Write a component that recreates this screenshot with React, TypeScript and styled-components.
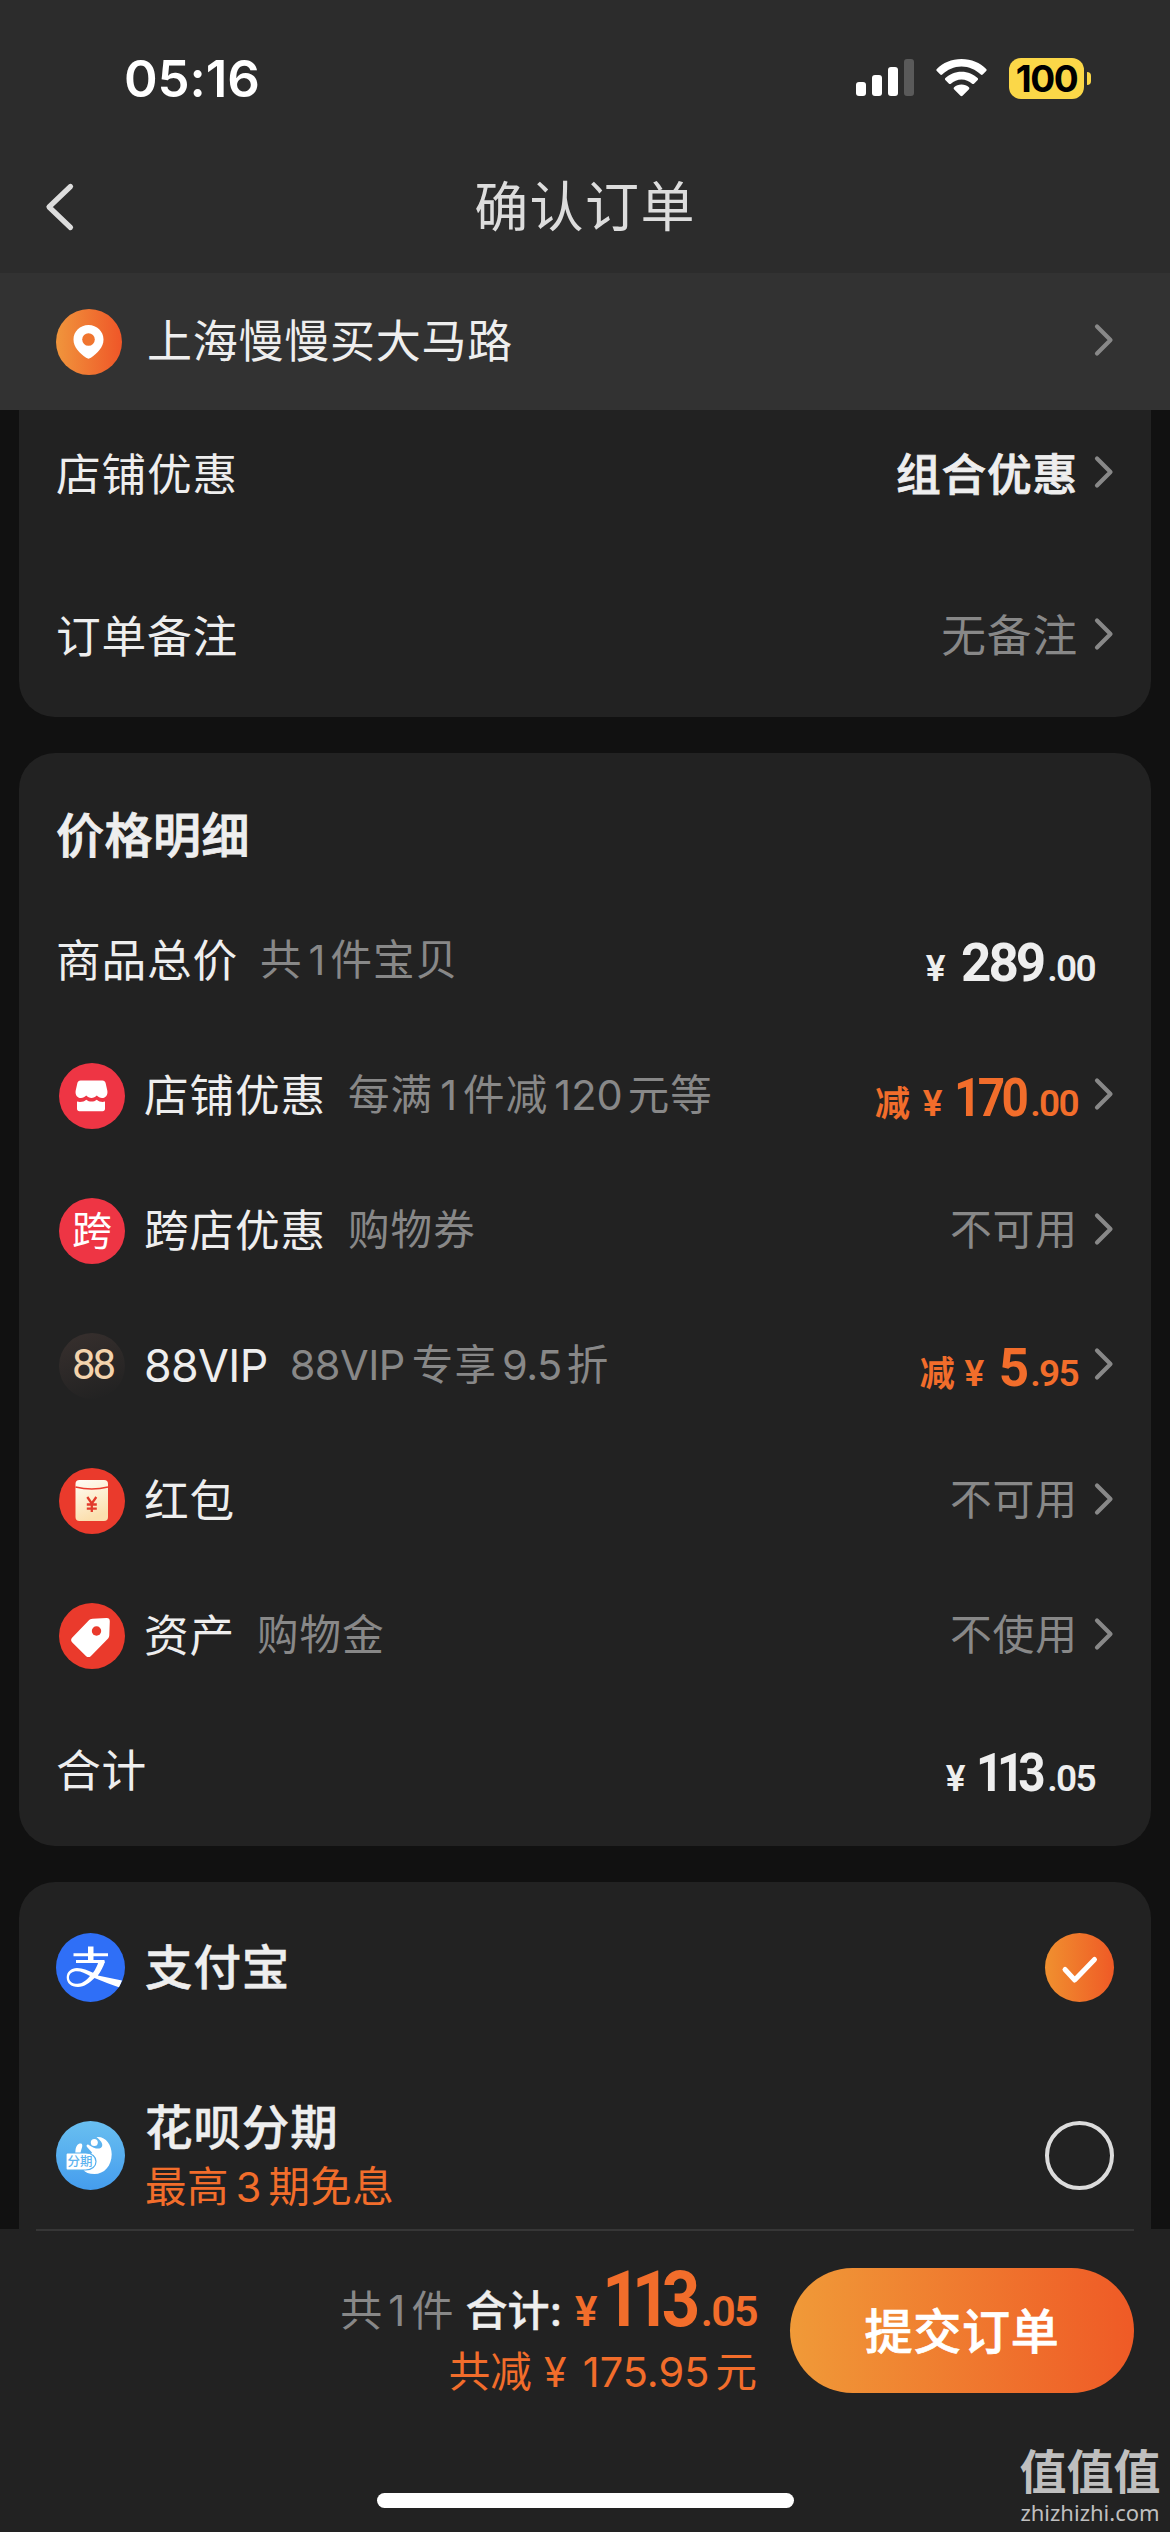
import React from "react";
import styled, { createGlobalStyle } from "styled-components";

const GlobalStyle = createGlobalStyle`
  * { box-sizing: border-box; }
  html, body { margin: 0; padding: 0; background: #111111; }
  body {
    font-family: Inter, "Noto Sans CJK SC", sans-serif;
    text-autospace: no-autospace;
    -webkit-font-smoothing: antialiased;
  }
`;

const ORANGE = "#f26d2b";

const Screen = styled.div`
  width: 1170px;
  height: 2532px;
  display: flex;
  flex-direction: column;
  overflow: hidden;
  background: #111111;
  color: #eeeeee;
  line-height: 1;
  white-space: nowrap;
`;

/* ---------- top area ---------- */

const TopArea = styled.header`
  height: 273px;
  flex: none;
  background: #2c2c2c;
`;

const StatusBar = styled.div`
  height: 141px;
  padding: 15px 79px 0 124px;
  display: flex;
  align-items: center;
  justify-content: space-between;
`;

const Clock = styled.span`
  font-size: 51px;
  font-weight: 600;
  color: #ffffff;
  letter-spacing: -0.1px;
`;

const StatusIcons = styled.div`
  display: flex;
  align-items: center;
  gap: 22px;
`;

const Battery = styled.div`
  display: flex;
  align-items: center;
  gap: 3px;
`;

const BatteryBody = styled.div`
  width: 75px;
  height: 41px;
  border-radius: 12px;
  background: #fbd748;
  color: #000000;
  font-size: 37px;
  font-weight: 700;
  letter-spacing: -1.4px;
  display: flex;
  align-items: center;
  justify-content: center;
`;

const BatteryNub = styled.div`
  width: 4px;
  height: 13px;
  border-radius: 0 5px 5px 0;
  background: #fbd748;
`;

const NavBar = styled.div`
  height: 132px;
  padding: 0 44px;
  display: grid;
  grid-template-columns: 60px 1fr 60px;
  align-items: center;
`;

const NavTitle = styled.h1`
  margin: 2px 0 0;
  text-align: center;
  font-size: 54px;
  font-weight: 400;
  letter-spacing: 1.4px;
  color: #dddddd;
`;

const AddressBar = styled.div`
  height: 137px;
  flex: none;
  padding: 0 56px 0 56px;
  display: flex;
  align-items: center;
  background: #323232;
`;

const AddressText = styled.span`
  flex: 1;
  margin-left: 25px;
  font-size: 45px;
  letter-spacing: 0.75px;
`;

/* ---------- cards ---------- */

const Scroller = styled.main`
  height: 1819px;
  flex: none;
  overflow: hidden;
  padding: 0 19px;
  display: flex;
  flex-direction: column;
  gap: 36px;
`;

const Card = styled.section<{ $height: number; $pad: string; $gap?: number; $open?: boolean }>`
  height: ${(p) => p.$height}px;
  flex: none;
  padding: ${(p) => p.$pad};
  display: flex;
  flex-direction: column;
  gap: ${(p) => p.$gap ?? 0}px;
  background: #222222;
  border-radius: ${(p) => (p.$open ? "0 0 36px 36px" : "36px")};
`;

const CardTitle = styled.h2`
  margin: 0;
  height: 113px;
  padding-bottom: 2px;
  display: flex;
  align-items: center;
  font-size: 48px;
  font-weight: 500;
  -webkit-text-stroke: 0.9px currentColor;
  letter-spacing: 0.5px;
`;

const Row = styled.div<{ $height: number }>`
  height: ${(p) => p.$height}px;
  flex: none;
  display: flex;
  align-items: center;
  justify-content: space-between;
`;

const Side = styled.div`
  display: flex;
  align-items: center;
`;

const Label = styled.span<{ $latin?: boolean }>`
  padding-top: 2px;
  font-size: 44.7px;
  letter-spacing: ${(p) => (p.$latin ? -0.6 : 0.8)}px;
`;

const Hint = styled.span`
  margin-left: 22px;
  font-size: 41.5px;
  letter-spacing: 1.1px;
  color: #888888;
`;

const Digits = styled.span<{ $l?: number; $r?: number; $ls?: number }>`
  margin: 0 ${(p) => p.$r ?? 0}px 0 ${(p) => p.$l ?? 0}px;
  letter-spacing: ${(p) => p.$ls ?? 0}px;
`;

const Value = styled.span<{ $size: number }>`
  font-size: ${(p) => p.$size}px;
  letter-spacing: 0.9px;
  color: #888888;
`;

const StrongValue = styled(Label)`
  font-weight: 500;
  -webkit-text-stroke: 0.8px currentColor;
`;

const IconSlot = styled.div`
  width: 66px;
  height: 66px;
  margin: 0 19px 0 3px;
  flex: none;
  display: flex;
`;

const RoundBadge = styled.div`
  width: 66px;
  height: 66px;
  border-radius: 50%;
  display: flex;
  align-items: center;
  justify-content: center;
`;

const CrossBadge = styled(RoundBadge)`
  background: #ee3544;
  color: #ffffff;
  font-size: 40px;
`;

const VipBadge = styled(RoundBadge)`
  padding: 0 0 1px 1px;
  background: linear-gradient(160deg, #38302e, #222222 90%);
  color: #f3d3ac;
  font-family: Roboto, sans-serif;
  font-size: 42px;
  letter-spacing: -3px;
`;

/* ---------- money ---------- */

const Money = styled.span<{ $color: string; $drop?: number; $end?: number }>`
  display: flex;
  align-items: baseline;
  margin-top: ${(p) => p.$drop ?? 0}px;
  margin-right: ${(p) => p.$end ?? 0}px;
  font-family: Roboto, "Noto Sans CJK SC", sans-serif;
  font-weight: 700;
  color: ${(p) => p.$color};
`;

const MoneyTag = styled.span<{ $r: number }>`
  font-size: 35px;
  font-weight: 600;
  margin-right: ${(p) => p.$r}px;
`;

const Yen = styled.span<{ $r: number; $size?: number }>`
  font-size: ${(p) => p.$size ?? 37}px;
  font-weight: 600;
  width: ${(p) => (p.$size ? 24 : 21)}px;
  display: flex;
  justify-content: center;
  margin-right: ${(p) => p.$r}px;
`;

type Fit = { size?: number; ls?: number; scale?: number; pull?: number; push?: number };

const Whole = styled.span<{ $fit: Fit }>`
  display: block;
  font-size: ${(p) => p.$fit.size ?? 53}px;
  letter-spacing: ${(p) => p.$fit.ls ?? -3}px;
  transform: scaleX(${(p) => p.$fit.scale ?? 1});
  transform-origin: right;
  margin: 0 ${(p) => p.$fit.push ?? 0}px 0 ${(p) => -(p.$fit.pull ?? 0)}px;
`;

const Cents = styled.span<{ $size?: number }>`
  font-size: ${(p) => p.$size ?? 37}px;
  font-weight: 600;
  letter-spacing: -1.7px;
  margin-left: 4px;
`;

/* ---------- payment ---------- */

const PayText = styled.div`
  margin-left: 20px;
  display: flex;
  flex-direction: column;
  gap: 15px;
`;

const PayName = styled.span`
  padding-top: 2px;
  font-size: 47.5px;
  font-weight: 500;
  -webkit-text-stroke: 0.5px currentColor;
  letter-spacing: 0.9px;
`;

const PayNote = styled.span`
  font-size: 41.5px;
  letter-spacing: 0.4px;
  color: ${ORANGE};
`;

const Radio = styled.div<{ $on?: boolean }>`
  width: 69px;
  height: 69px;
  border-radius: 50%;
  border: ${(p) => (p.$on ? "none" : "4px solid #dcdcdc")};
  background: ${(p) => (p.$on ? "linear-gradient(90deg, #f0902f, #ef5a26)" : "transparent")};
`;

/* ---------- footer ---------- */

const Footer = styled.footer`
  flex: 1;
  padding: 0 36px;
  background: #222222;
  display: grid;
  grid-template-rows: 2px 1fr;
  position: relative;
`;

const Divider = styled.div`
  background: #363636;
`;

const Checkout = styled.div`
  height: 162px;
  padding-top: 37px;
  display: flex;
  justify-content: flex-end;
  gap: 33px;
`;

const Totals = styled.div`
  margin-top: -6px;
  display: flex;
  flex-direction: column;
  align-items: flex-end;
`;

const TotalLine = styled.div`
  height: 77px;
  display: flex;
  align-items: baseline;
  font-size: 42px;
`;

const Count = styled.span`
  color: #888888;
  margin-right: 12px;
`;

const SumLabel = styled.span`
  font-weight: 500;
  -webkit-text-stroke: 0.4px currentColor;
  margin-right: 12px;
`;

const SavedLine = styled.div`
  margin-top: 13px;
  display: flex;
  align-items: baseline;
  font-size: 41.5px;
  color: ${ORANGE};
`;

const SavedYen = styled.span`
  width: 21px;
  margin: 0 17px 0 13px;
  display: flex;
  justify-content: center;
  font-size: 41px;
`;

const SubmitButton = styled.button`
  width: 344px;
  height: 125px;
  padding: 0 0 5px;
  border: none;
  border-radius: 63px;
  background: linear-gradient(90deg, #f09a38, #ef5a26);
  color: #ffffff;
  font-family: inherit;
  font-size: 48px;
  font-weight: 500;
  -webkit-text-stroke: 0.7px currentColor;
  letter-spacing: 0.8px;
`;

const HomeIndicator = styled.div`
  position: absolute;
  left: 377px;
  bottom: 24px;
  width: 417px;
  height: 15px;
  border-radius: 8px;
  background: #ffffff;
`;

const Watermark = styled.div`
  position: absolute;
  right: 9px;
  bottom: 8px;
  width: 142px;
  display: flex;
  flex-direction: column;
  align-items: center;
  gap: 4px;
  color: #bfbfbf;
`;

const WatermarkName = styled.span`
  font-size: 47px;
  font-weight: 700;
  line-height: 48px;
`;

const WatermarkUrl = styled.span`
  font-family: "Noto Sans", sans-serif;
  font-size: 22px;
  line-height: 24px;
`;

/* ---------- drawings ---------- */

const ChevronSvg = styled.svg`
  display: block;
  flex: none;
  margin: -3px 0 0 16px;
`;

const Chevron = () => (
  <ChevronSvg width="20" height="34" viewBox="0 0 20 34" fill="none">
    <path d="M3 3.5 16.5 17 3 30.5" stroke="#888888" strokeWidth="4.2" strokeLinecap="round" strokeLinejoin="round" />
  </ChevronSvg>
);

const BackIcon = () => (
  <svg width="32" height="50" viewBox="0 0 32 50" fill="none">
    <path d="M26.5 4.5 5 25l21.5 20.5" stroke="#dddddd" strokeWidth="5.2" strokeLinecap="round" strokeLinejoin="round" />
  </svg>
);

const SignalIcon = () => (
  <svg width="58" height="38" viewBox="0 0 58 38">
    <rect x="0" y="23" width="10" height="14" rx="3" fill="#fff" />
    <rect x="16" y="16" width="10" height="21" rx="3" fill="#fff" />
    <rect x="32" y="8" width="10" height="29" rx="3" fill="#fff" />
    <rect x="48" y="0" width="10" height="37" rx="3" fill="#5a5a5a" />
  </svg>
);

const WifiIcon = () => (
  <svg width="51" height="38" viewBox="0 0 51 38" fill="#fff">
    <path d="M25.5 0C35.6 0 44 3.800 50.200 9.900c.6.6.6 1.400 0 2l-3.500 3.700c-.5.5-1.300.5-1.900 0C39.500 10.700 33 7.600 25.500 7.600S11.500 10.700 6.200 15.600c-.6.5-1.400.5-1.900 0L.8 11.900c-.6-.6-.6-1.400 0-2C7 3.800 15.400 0 25.500 0Z" />
    <path d="M25.500 12.700c6.500 0 12 2.500 16.100 6.300.6.600.6 1.400.1 2l-3.700 3.700c-.5.5-1.300.5-1.900 0-2.900-2.600-6.500-4.300-10.600-4.300s-7.700 1.700-10.600 4.300c-.6.5-1.400.5-1.900 0L9.300 21c-.5-.6-.5-1.400.1-2 4.100-3.800 9.600-6.300 16.100-6.300Z" />
    <path d="M25.500 25.600c2.900 0 5.400 1 7.400 2.700.6.500.6 1.400.1 1.900l-6.500 6.600c-.6.600-1.400.6-2 0L18 30.200c-.5-.5-.5-1.400.1-1.900 2-1.700 4.500-2.700 7.400-2.700Z" />
  </svg>
);

const PinIcon = () => (
  <svg width="66" height="66" viewBox="0 0 66 66">
    <defs>
      <linearGradient id="pin" x1="0" x2="1" y1="0" y2="0">
        <stop offset="0" stopColor="#f0953c" />
        <stop offset="1" stopColor="#ef5628" />
      </linearGradient>
    </defs>
    <circle cx="33" cy="33" r="33" fill="url(#pin)" />
    <path d="M32.500 16C41 16 47.500 22.500 47.500 30.500c0 8-6 13.500-12.600 18.300-1.500 1.100-3.300 1.100-4.800 0C23.500 44 17.500 38.500 17.500 30.500 17.500 22.500 24 16 32.500 16Z" fill="#fff" />
    <circle cx="32.500" cy="30.500" r="6.300" fill="#f0752f" />
  </svg>
);

const ShopIcon = () => (
  <svg width="66" height="66" viewBox="0 0 66 66">
    <circle cx="33" cy="33" r="33" fill="#ee3544" />
    <path d="M21.500 17.500h22c1.600 0 2.700.9 3.100 2.400l1.700 7.600c.8 4.400-1.500 7.600-5.300 7.600-2 0-3.700-.9-5.200-2.500-1.500 1.600-3.300 2.500-5.300 2.500s-3.800-.9-5.300-2.500c-1.500 1.600-3.200 2.500-5.200 2.500-3.800 0-6.100-3.200-5.300-7.600l1.700-7.600c.4-1.500 1.500-2.400 3.100-2.400Z" fill="#fff" />
    <path d="M18 38.600c4 1 7-.1 9.200-1.900 1.700 1.300 3.300 1.900 5.300 1.900s3.600-.6 5.300-1.900c2.200 1.800 5.200 2.900 8.200 1.900v7.200c0 1.500-.9 2.400-2.400 2.400H20.400c-1.500 0-2.400-.9-2.400-2.400Z" fill="#fff" />
  </svg>
);

const EnvelopeIcon = () => (
  <svg width="66" height="66" viewBox="0 0 66 66">
    <defs>
      <linearGradient id="env" x1="0" x2="0.300" y1="0" y2="1">
        <stop offset="0" stopColor="#fffdf6" />
        <stop offset="1" stopColor="#fbdfae" />
      </linearGradient>
    </defs>
    <circle cx="33" cy="33" r="33" fill="#ea3a2c" />
    <rect x="16.500" y="12" width="32.500" height="41" rx="4" fill="url(#env)" />
    <path d="M16.500 19q16.200 4 32.500 0" stroke="#ea3a2c" strokeWidth="1.700" fill="none" />
    <path d="m28.300 29 4.500 6.500 4.500-6.500M32.800 35.500V44M27.800 36.500h10M27.800 40.700h10" stroke="#e23a2c" strokeWidth="2.300" fill="none" />
  </svg>
);

const TagIcon = () => (
  <svg width="66" height="66" viewBox="0 0 66 66">
    <circle cx="33" cy="33" r="33" fill="#ea3a2c" />
    <path d="M33.500 15.700 47.500 15c2.200-.1 3.300 1 3.300 3.200l-.5 14c-.1 1.600-.6 2.700-1.700 3.800L32 52.900c-1.600 1.600-3.500 1.600-5.100 0L13.300 39.600c-1.600-1.600-1.600-3.500 0-5.100L29.700 17.500c1.100-1.100 2.200-1.700 3.800-1.800Z" fill="#fff" />
    <circle cx="37.500" cy="28" r="4.700" fill="#ea3a2c" />
  </svg>
);

const AlipayIcon = () => (
  <svg width="69" height="69" viewBox="0 0 69 69">
    <defs>
      <clipPath id="alipayClip">
        <circle cx="34.500" cy="34.500" r="34.500" />
      </clipPath>
    </defs>
    <g clipPath="url(#alipayClip)">
      <rect width="69" height="69" fill="#2f6ff7" />
      <path d="M32 13.500h5.500v15H32ZM17.500 20.300h34.500v2.900H17.500ZM20 27h28.500v2.900H20Z" fill="#fff" />
      <path d="M42.500 28.500h6.500c-1.800 5.500-4.200 10-7.200 14L66 47.500 63.500 54.500c-8.500-2.700-16.500-6-25-9.500-5 5-10.200 8.900-16.500 8.900-7 0-11.300-4-11.300-9.500 0-5.500 4.500-9.400 10.300-9.400 6 0 10.500 2.200 16 4.800 2.500-3.500 4.500-7.200 5.500-11.300Z" fill="#fff" />
      <path d="M34 43c-4.500-2.700-8.800-4.800-13.200-4.800-4.500 0-7.800 2.400-7.800 6.200 0 4.100 3.500 6.300 8.500 6.300 4.600 0 8.500-3 12.500-7.700Z" fill="#2f6ff7" />
    </g>
  </svg>
);

const BadgeSvgText = styled.text`
  font-family: "Noto Sans CJK SC", sans-serif;
  font-size: 12.5px;
  font-weight: 500;
`;

const HuabeiIcon = () => (
  <svg width="69" height="69" viewBox="0 0 69 69">
    <defs>
      <linearGradient id="huabei" x1="0" x2="0" y1="0" y2="1">
        <stop offset="0" stopColor="#69bff0" />
        <stop offset="1" stopColor="#459dee" />
      </linearGradient>
    </defs>
    <circle cx="34.500" cy="34.500" r="34.500" fill="url(#huabei)" />
    <path d="M19.500 29c.6-4 2.300-6.500 5-6.500 2.200 0 2.300 2.500.7 6.500l-1 4h-5Z" fill="#fff" />
    <path d="M40.500 16c9-1 15.200 7.400 15.200 17.200C55.700 45 48 53 38.500 53c-5.500 0-9.300-1.500-11.500-4.500l9-17-5.200-5.800c-.8-1.400.4-2.700 2-1.800 6.300 4.500 12 4.600 13.300 1.300 1-2.800-1.600-5.700-5.600-9.200Z" fill="#fff" />
    <circle cx="38.300" cy="21.500" r="3.500" fill="#fff" />
    <path d="M11.500 32h18c6.500 0 10.500 3.700 10.500 8.500S36 49 29.500 49h-18c-1 0-1.500-.5-1.500-1.500v-14c0-1 .5-1.500 1.500-1.500Z" fill="#fff" stroke="#55aeee" strokeWidth="1.200" />
    <BadgeSvgText x="11.500" y="45" fill="#5db3ef">分期</BadgeSvgText>
  </svg>
);

const CheckMark = () => (
  <svg width="69" height="69" viewBox="0 0 69 69" fill="none">
    <path d="M20 36.500 29.700 47 49.500 26.500" stroke="#fff" strokeWidth="5" strokeLinecap="round" strokeLinejoin="round" />
  </svg>
);

/* ---------- composed parts ---------- */

type AmountProps = {
  tag?: boolean;
  tagGap?: number;
  whole: string;
  cents: string;
  color: string;
  yenGap: number;
  end?: number;
  fit?: Fit;
};

const Amount = ({ tag, tagGap = 12, whole, cents, color, yenGap, end, fit = {} }: AmountProps) => (
  <Money $color={color} $drop={6} $end={end}>
    {tag && <MoneyTag $r={tagGap}>减</MoneyTag>}
    <Yen $r={yenGap}>¥</Yen>
    <Whole $fit={fit}>{whole}</Whole>
    <Cents>.{cents}</Cents>
  </Money>
);

type PriceRowProps = {
  icon?: React.ReactNode;
  label: string;
  latin?: boolean;
  hint?: React.ReactNode;
  right: React.ReactNode;
  link?: boolean;
};

const PriceRow = ({ icon, label, latin, hint, right, link }: PriceRowProps) => (
  <Row $height={135}>
    <Side>
      {icon && <IconSlot>{icon}</IconSlot>}
      <Label $latin={latin}>{label}</Label>
      {hint && <Hint>{hint}</Hint>}
    </Side>
    <Side>
      {right}
      {link && <Chevron />}
    </Side>
  </Row>
);

export default function App() {
  return (
    <>
      <GlobalStyle />
      <Screen>
        <TopArea>
          <StatusBar>
            <Clock>05:16</Clock>
            <StatusIcons>
              <SignalIcon />
              <WifiIcon />
              <Battery>
                <BatteryBody>100</BatteryBody>
                <BatteryNub />
              </Battery>
            </StatusIcons>
          </StatusBar>
          <NavBar>
            <BackIcon />
            <NavTitle>确认订单</NavTitle>
          </NavBar>
        </TopArea>

        <AddressBar>
          <PinIcon />
          <AddressText>上海慢慢买大马路</AddressText>
          <Chevron />
        </AddressBar>

        <Scroller>
          <Card $height={307} $pad="14px 37px 0 37px" $gap={62} $open>
            <Row $height={100}>
              <Label>店铺优惠</Label>
              <Side>
                <StrongValue>组合优惠</StrongValue>
                <Chevron />
              </Side>
            </Row>
            <Row $height={100}>
              <Label>订单备注</Label>
              <Side>
                <Value $size={44.7}>无备注</Value>
                <Chevron />
              </Side>
            </Row>
          </Card>

          <Card $height={1093} $pad="27px 37px 0 37px">
            <CardTitle>价格明细</CardTitle>
            <PriceRow
              label="商品总价"
              hint={<>共<Digits $l={6} $r={5}>1</Digits>件宝贝</>}
              right={<Amount whole="289" cents="00" color="#eeeeee" yenGap={15} end={19} />}
            />
            <PriceRow
              icon={<ShopIcon />}
              label="店铺优惠"
              hint={<>每满<Digits $l={7} $r={6}>1</Digits>件减<Digits $l={6} $r={5}>120</Digits>元等</>}
              right={
                <Amount
                  tag
                  whole="170"
                  cents="00"
                  color={ORANGE}
                  yenGap={11}
                  fit={{ ls: -4, scale: 0.9, pull: 8, push: 1 }}
                />
              }
              link
            />
            <PriceRow
              icon={<CrossBadge>跨</CrossBadge>}
              label="跨店优惠"
              hint="购物券"
              right={<Value $size={41.8}>不可用</Value>}
              link
            />
            <PriceRow
              icon={<VipBadge>88</VipBadge>}
              label="88VIP"
              latin
              hint={<><Digits $r={7} $ls={-0.5}>88VIP</Digits>专享<Digits $l={5} $r={5} $ls={-0.5}>9.5</Digits>折</>}
              right={<Amount tag tagGap={9} whole="5" cents="95" color={ORANGE} yenGap={14} />}
              link
            />
            <PriceRow icon={<EnvelopeIcon />} label="红包" right={<Value $size={41.8}>不可用</Value>} link />
            <PriceRow icon={<TagIcon />} label="资产" hint="购物金" right={<Value $size={41.8}>不使用</Value>} link />
            <PriceRow
              label="合计"
              right={
                <Amount
                  whole="113"
                  cents="05"
                  color="#eeeeee"
                  yenGap={10}
                  end={19}
                  fit={{ ls: -7, scale: 0.9, pull: 7, push: 4 }}
                />
              }
            />
          </Card>

          <Card $height={500} $pad="35px 37px 0 37px" $gap={78}>
            <Row $height={100}>
              <Side>
                <AlipayIcon />
                <PayText>
                  <PayName>支付宝</PayName>
                </PayText>
              </Side>
              <Radio $on>
                <CheckMark />
              </Radio>
            </Row>
            <Row $height={120}>
              <Side>
                <HuabeiIcon />
                <PayText>
                  <PayName>花呗分期</PayName>
                  <PayNote>最高<Digits $l={7} $r={7}>3</Digits>期免息</PayNote>
                </PayText>
              </Side>
              <Radio />
            </Row>
          </Card>
        </Scroller>

        <Footer>
          <Divider />
          <Checkout>
            <Totals>
              <TotalLine>
                <Count>共<Digits $l={6} $r={6}>1</Digits>件</Count>
                <SumLabel>合计:</SumLabel>
                <Money $color={ORANGE}>
                  <Yen $r={4} $size={42}>¥</Yen>
                  <Whole $fit={{ size: 77, ls: -10, scale: 0.87, pull: 13, push: 5 }}>113</Whole>
                  <Cents $size={43}>.05</Cents>
                </Money>
              </TotalLine>
              <SavedLine>
                共减<SavedYen>¥</SavedYen>175.95<Digits $l={6}>元</Digits>
              </SavedLine>
            </Totals>
            <SubmitButton>提交订单</SubmitButton>
          </Checkout>
          <HomeIndicator />
          <Watermark>
            <WatermarkName>值值值</WatermarkName>
            <WatermarkUrl>zhizhizhi.com</WatermarkUrl>
          </Watermark>
        </Footer>
      </Screen>
    </>
  );
}
